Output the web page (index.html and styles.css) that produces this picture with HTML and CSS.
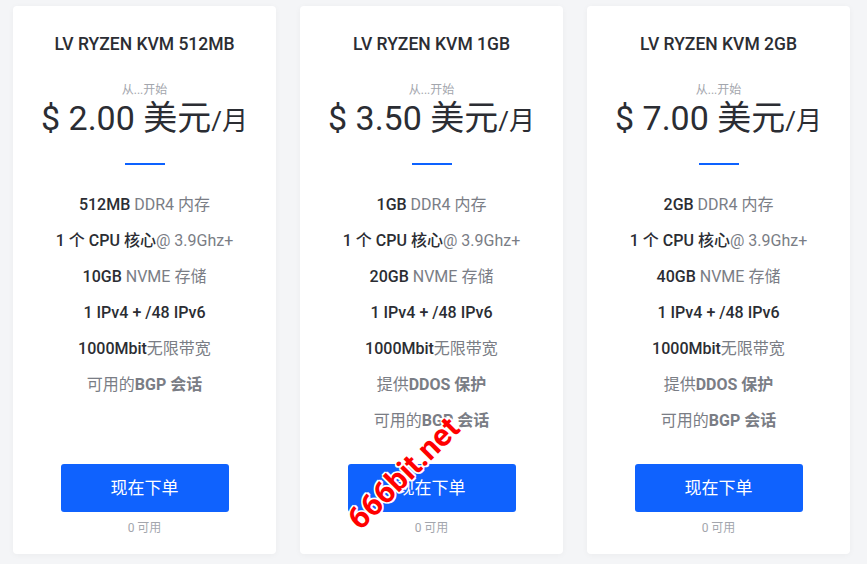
FILE: index.html
```html
<!DOCTYPE html>
<html lang="zh-CN">
<head>
  <meta charset="UTF-8" />
  <title>LV RYZEN KVM</title>
  <link rel="stylesheet" href="styles.css">
</head>
<body>
  <div class="plans">
    <div class="plan">
      <h3 class="plan-name">LV RYZEN KVM 512MB</h3>
      <div class="from">从...开始</div>
      <div class="price">$ 2.00 美元<span class="cycle">/月</span></div>
      <div class="divider"></div>
      <ul class="features">
        <li><b>512MB</b> DDR4 内存</li>
        <li><b>1 个 CPU 核心</b>@ 3.9Ghz+</li>
        <li><b>10GB</b> NVME 存储</li>
        <li><b>1 IPv4 + /48 IPv6</b></li>
        <li><b>1000Mbit</b>无限带宽</li>
        <li>可用的<b class="soft">BGP 会话</b></li>
      </ul>
      <a class="order-btn" href="#">现在下单</a>
      <div class="stock">0 可用</div>
    </div>

    <div class="plan">
      <h3 class="plan-name">LV RYZEN KVM 1GB</h3>
      <div class="from">从...开始</div>
      <div class="price">$ 3.50 美元<span class="cycle">/月</span></div>
      <div class="divider"></div>
      <ul class="features">
        <li><b>1GB</b> DDR4 内存</li>
        <li><b>1 个 CPU 核心</b>@ 3.9Ghz+</li>
        <li><b>20GB</b> NVME 存储</li>
        <li><b>1 IPv4 + /48 IPv6</b></li>
        <li><b>1000Mbit</b>无限带宽</li>
        <li>提供<b class="soft">DDOS 保护</b></li>
        <li>可用的<b class="soft">BGP 会话</b></li>
      </ul>
      <a class="order-btn" href="#">现在下单</a>
      <div class="stock">0 可用</div>
      <div class="watermark">666bit.net</div>
    </div>

    <div class="plan">
      <h3 class="plan-name">LV RYZEN KVM 2GB</h3>
      <div class="from">从...开始</div>
      <div class="price">$ 7.00 美元<span class="cycle">/月</span></div>
      <div class="divider"></div>
      <ul class="features">
        <li><b>2GB</b> DDR4 内存</li>
        <li><b>1 个 CPU 核心</b>@ 3.9Ghz+</li>
        <li><b>40GB</b> NVME 存储</li>
        <li><b>1 IPv4 + /48 IPv6</b></li>
        <li><b>1000Mbit</b>无限带宽</li>
        <li>提供<b class="soft">DDOS 保护</b></li>
        <li>可用的<b class="soft">BGP 会话</b></li>
      </ul>
      <a class="order-btn" href="#">现在下单</a>
      <div class="stock">0 可用</div>
    </div>
  </div>
</body>
</html>
```

FILE: styles.css
```css
body { margin: 0; background: #f4f5f7; font-family: Roboto, "Noto Sans CJK SC", sans-serif; color: #2b2d33; }
.plans { display: flex; gap: 24px; padding: 6px 15px 10px 13px; }
.plan { position: relative; width: 263px; height: 548px; background: #fff; border-radius: 4px;
        box-shadow: 0 1px 6px rgba(0,0,0,0.04); display: flex; flex-direction: column; align-items: center; }
.plan-name { margin: 27px 0 0; font-size: 17.5px; font-weight: 500; line-height: 22px; color: #2b2d33; }
.from { margin-top: 28px; font-size: 12px; line-height: 14px; color: #a3a6ad; }
.price { margin-top: 1px; font-size: 34px; line-height: 40px; font-weight: 400; color: #2b2d33; }
.price .cycle { font-size: 26px; }
.divider { width: 40px; height: 2px; background: #0d62ff; margin-top: 22px; }
.features { list-style: none; margin: 22px 0 0; padding: 0; text-align: center; }
.features li { font-size: 16px; line-height: 36px; color: #7a7d85; }
.features b { font-weight: 500; color: #2b2d33; }
.features b.soft { font-weight: 700; color: #7a7d85; }
.order-btn { margin-top: auto; width: 168px; height: 48px; line-height: 48px; background: #0f62fe; color: #fff;
             text-align: center; font-size: 17px; text-decoration: none; border-radius: 3px; }
.stock { margin: 9px 0 19px; font-size: 12px; line-height: 14px; color: #a3a6ad; }
.watermark { position: absolute; left: 66px; top: 494px; font-size: 31px; font-weight: 700; color: #f00;
             transform: rotate(-45deg); transform-origin: left bottom;
             text-shadow: 2px 0 0 #fff, -2px 0 0 #fff, 0 2px 0 #fff, 0 -2px 0 #fff,
                          1px 1px 0 #fff, -1px -1px 0 #fff, 1px -1px 0 #fff, -1px 1px 0 #fff; }
```
